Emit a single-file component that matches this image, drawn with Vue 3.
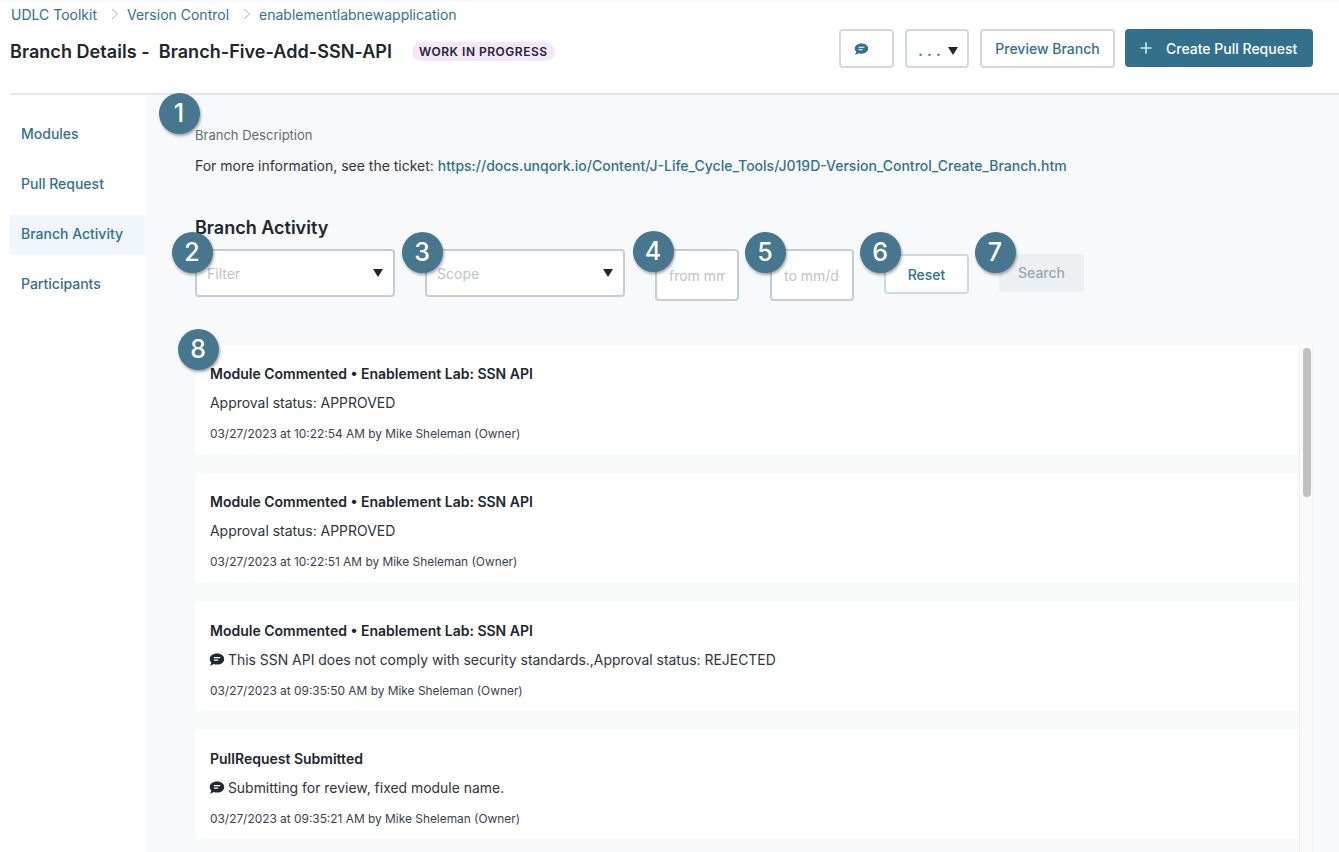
<template>
  <div class="page">
    <header class="top">
      <nav class="crumbs">
        <a>UDLC Toolkit</a>
        <svg class="chev" viewBox="0 0 8 12"><path d="M1 1l5.5 5L1 11" /></svg>
        <a>Version Control</a>
        <svg class="chev" viewBox="0 0 8 12"><path d="M1 1l5.5 5L1 11" /></svg>
        <a>enablementlabnewapplication</a>
      </nav>
      <div class="title-row">
        <div class="title-left">
          <h1>Branch Details -&nbsp; Branch-Five-Add-SSN-API</h1>
          <span class="status">WORK IN PROGRESS</span>
        </div>
        <div class="actions">
          <button class="btn icon-btn">
            <svg class="bubble" viewBox="0 0 16 14">
              <path class="fill" d="M8 0.5C3.8 0.5 0.8 2.9 0.8 6c0 1.3 0.6 2.5 1.5 3.4-0.2 1.1-0.9 2.3-1.6 3.1 1.6-0.1 3-0.7 4-1.5 1 0.4 2.1 0.6 3.3 0.6 4.2 0 7.2-2.5 7.2-5.6S12.2 0.5 8 0.5z" />
              <path class="lines" d="M4.8 4.6h6.4M4.8 7.2h4.4" />
            </svg>
          </button>
          <button class="btn more-btn"><span class="dots">. . .</span><i class="caret"></i></button>
          <button class="btn preview-btn">Preview Branch</button>
          <button class="btn primary">
            <svg class="plus" viewBox="0 0 12 12"><path d="M6 0.5v11M0.5 6h11" /></svg>
            Create Pull Request
          </button>
        </div>
      </div>
    </header>

    <div class="body">
      <aside class="side">
        <a v-for="item in navItems" :key="item" class="nav-item" :class="{ active: item === 'Branch Activity' }">{{ item }}</a>
      </aside>

      <main class="main">
        <div class="desc-label">Branch Description</div>
        <p class="desc">
          For more information, see the ticket:
          <a>https://docs.unqork.io/Content/J-Life_Cycle_Tools/J019D-Version_Control_Create_Branch.htm</a>
        </p>

        <h2>Branch Activity</h2>
        <div class="filters">
          <div class="field select"><span>Filter</span><i class="caret"></i></div>
          <div class="field select"><span>Scope</span><i class="caret"></i></div>
          <input class="field date from" placeholder="from mm/dd/yyyy" />
          <input class="field date to" placeholder="to mm/dd/yyyy" />
          <button class="btn reset">Reset</button>
          <button class="search">Search</button>
        </div>

        <div class="list-wrap">
          <div class="list">
            <article v-for="(row, i) in rows" :key="i" class="card">
              <div class="card-title">{{ row.title }}</div>
              <div class="card-text">
                <svg v-if="row.comment" class="bubble dark" viewBox="0 0 16 14">
                  <path class="fill" d="M8 0.5C3.8 0.5 0.8 2.9 0.8 6c0 1.3 0.6 2.5 1.5 3.4-0.2 1.1-0.9 2.3-1.6 3.1 1.6-0.1 3-0.7 4-1.5 1 0.4 2.1 0.6 3.3 0.6 4.2 0 7.2-2.5 7.2-5.6S12.2 0.5 8 0.5z" />
                  <path class="lines" d="M4.8 4.6h6.4M4.8 7.2h4.4" />
                </svg>
                {{ row.text }}
              </div>
              <div class="card-meta">{{ row.meta }}</div>
            </article>
          </div>
          <div class="track"><div class="thumb"></div></div>
        </div>
      </main>
    </div>

    <span
      v-for="m in markers"
      :key="m.n"
      class="marker"
      :style="{ left: m.x - 20.5 + 'px', top: m.y - 20.5 + 'px' }"
    >{{ m.n }}</span>
  </div>
</template>

<script setup>
const navItems = ['Modules', 'Pull Request', 'Branch Activity', 'Participants']

const commented = 'Module Commented • Enablement Lab: SSN API'

const rows = [
  { title: commented, text: 'Approval status: APPROVED', meta: '03/27/2023 at 10:22:54 AM by Mike Sheleman (Owner)' },
  { title: commented, text: 'Approval status: APPROVED', meta: '03/27/2023 at 10:22:51 AM by Mike Sheleman (Owner)' },
  { title: commented, comment: true, text: 'This SSN API does not comply with security standards.,Approval status: REJECTED', meta: '03/27/2023 at 09:35:50 AM by Mike Sheleman (Owner)' },
  { title: 'PullRequest Submitted', comment: true, text: 'Submitting for review, fixed module name.', meta: '03/27/2023 at 09:35:21 AM by Mike Sheleman (Owner)' }
]

// Callout numbers sit on top of the screenshot, so they keep their own coordinates
const markers = [
  { n: 1, x: 179, y: 113 },
  { n: 2, x: 192, y: 252 },
  { n: 3, x: 422, y: 252 },
  { n: 4, x: 653, y: 251 },
  { n: 5, x: 765, y: 252 },
  { n: 6, x: 880, y: 252 },
  { n: 7, x: 995, y: 252 },
  { n: 8, x: 198, y: 349 }
]
</script>

<style>
html, body {
  margin: 0;
  background: #fff;
}
</style>

<style scoped>
.page {
  position: relative;
  height: 852px;
  overflow: hidden;
  background: #fff;
  box-shadow: inset 0 2px 0 #f8f9fa;
  font-family: Inter, "Liberation Sans", sans-serif;
  color: #20262d;
}

.top {
  height: 95px;
  box-sizing: border-box;
  margin-left: 10px;
  border-bottom: 2px solid #e4e8ec;
  padding-right: 26px;
}

.crumbs {
  display: flex;
  align-items: center;
  height: 28px;
  padding-left: 1px;
  font-size: 14px;
  color: #33708c;
}

.chev {
  width: 8px;
  height: 12px;
  margin: 0 8px 0 14px;
  fill: none;
  stroke: #a6afb7;
  stroke-width: 1;
}

.title-row {
  display: flex;
  justify-content: space-between;
  align-items: flex-start;
  height: 65px;
}

.title-left {
  display: flex;
  align-items: center;
  height: 46px;
}

h1 {
  margin: 0;
  font-size: 18px;
  font-weight: 600;
  letter-spacing: 0.045px;
}

.status {
  margin-left: 20px;
  padding: 2px 7px;
  border-radius: 10px;
  background: #f6e6fa;
  font-size: 12px;
  font-weight: 600;
  letter-spacing: 0.5px;
  line-height: 15px;
}

.actions {
  display: flex;
  gap: 11px;
  margin-top: 1px;
}

.btn {
  box-sizing: border-box;
  height: 39px;
  border: 2px solid #ccdbe3;
  border-radius: 4px;
  background: #fff;
  font-family: inherit;
  font-size: 14px;
  font-weight: 500;
  color: #33708c;
}

.icon-btn {
  width: 55px;
  padding: 1px 0 0 13px;
  text-align: left;
}

.bubble {
  display: block;
  width: 15px;
  height: 13px;
}

.bubble .fill {
  fill: #33708c;
}

.bubble .lines {
  fill: none;
  stroke: #fff;
  stroke-width: 1.2;
}

.bubble.dark {
  display: inline-block;
  width: 16px;
  height: 14px;
  vertical-align: -2px;
  margin-left: -1px;
  margin-right: -1px;
}

.bubble.dark .fill {
  fill: #20262d;
}

.more-btn {
  width: 64px;
  display: flex;
  align-items: center;
  padding: 0 0 0 11px;
  color: #33708c;
}

.dots {
  width: 30px;
  flex-shrink: 0;
  font-size: 16px;
  text-align: left;
  white-space: nowrap;
  margin-top: 3px;
}

.caret {
  width: 0;
  height: 0;
  border-left: 5px solid transparent;
  border-right: 5px solid transparent;
  border-top: 8px solid #20262d;
}

.more-btn .caret {
  margin-top: 4px;
}

.preview-btn {
  width: 135px;
  padding: 0;
}

.primary {
  width: 188px;
  height: 38px;
  display: flex;
  align-items: center;
  padding: 0 0 0 15px;
  border: none;
  background: #33708c;
  color: #fff;
  margin-left: -1px;
}

.plus {
  width: 12px;
  height: 12px;
  margin-right: 14px;
  fill: none;
  stroke: #dfe9ee;
  stroke-width: 1.6;
}

.body {
  display: flex;
  height: 757px;
}

.side {
  width: 135px;
  margin-left: 10px;
  padding-top: 20px;
  flex-shrink: 0;
}

.nav-item {
  display: flex;
  align-items: center;
  box-sizing: border-box;
  height: 40px;
  margin-bottom: 10px;
  padding: 0 0 3px 11px;
  font-size: 14px;
  font-weight: 500;
  color: #33708c;
}

.nav-item.active {
  background: #f0f6f9;
}

.main {
  flex: 1;
  min-width: 0;
  padding: 32px 26px 0 50px;
  background: #f7f9fb;
}

.desc-label {
  font-size: 13px;
  line-height: 16px;
  color: #5f6c78;
}

.desc {
  margin: 13px 0 0;
  font-size: 14px;
  line-height: 20px;
  color: #2e353c;
}

.desc a {
  color: #33708c;
  font-weight: 500;
}

h2 {
  margin: 40px 0 0;
  font-size: 18px;
  line-height: 24px;
  font-weight: 600;
}

.filters {
  display: flex;
  align-items: flex-start;
  margin-top: 9px;
  height: 96px;
}

.field {
  box-sizing: border-box;
  display: flex;
  align-items: center;
  border: 2px solid #c6ced5;
  border-radius: 4px;
  background: #fff;
  font-family: inherit;
  font-size: 14px;
  color: #bcc5cc;
  overflow: hidden;
  white-space: nowrap;
}

.select {
  width: 199.5px;
  height: 48px;
  margin-right: 30.5px;
  justify-content: space-between;
  padding: 0 10px 0 10px;
}

.date {
  width: 84px;
  min-width: 0;
  height: 52px;
  padding: 0 12px;
  outline: none;
}

.date::placeholder {
  color: #bcc5cc;
  opacity: 1;
}

.from {
  margin-right: 31px;
}

.to {
  margin-right: 30px;
}

.reset {
  width: 85px;
  height: 40px;
  margin-top: 5px;
  padding: 0;
}

.search {
  width: 85px;
  height: 38px;
  margin: 5px 0 0 30px;
  padding: 0 0 2px;
  border: none;
  border-radius: 4px;
  background: #edf0f2;
  font-family: inherit;
  font-size: 14px;
  font-weight: 500;
  color: #9aa5af;
}

.list-wrap {
  display: flex;
  height: 520px;
}

.list {
  flex: 1;
  min-width: 0;
  display: flex;
  flex-direction: column;
  gap: 19.3px;
}

.card {
  height: 109px;
  box-sizing: border-box;
  flex-shrink: 0;
  padding: 20px 15px 0;
  background: #fff;
  border-radius: 2px;
}

.card-title {
  font-size: 14px;
  line-height: 18px;
  font-weight: 600;
}

.card-text {
  margin-top: 11px;
  font-size: 13.95px;
  line-height: 18px;
  color: #2e353c;
}

.card-meta {
  margin-top: 14px;
  font-size: 11.9px;
  line-height: 16px;
  color: #3a424a;
}

.track {
  width: 14px;
  flex-shrink: 0;
  padding: 3px 1px 0 3px;
  box-sizing: border-box;
  background: #fbfbfc;
  border-left: 1px solid #eef0f2;
  border-right: 1px solid #eef0f2;
}

.thumb {
  height: 149px;
  border-radius: 4px;
  background: #c1c1c1;
}

.marker {
  position: absolute;
  width: 41px;
  height: 41px;
  display: flex;
  align-items: center;
  justify-content: center;
  border-radius: 50%;
  background: #47768f;
  box-shadow: 1px 2px 3px rgba(0, 0, 0, 0.35);
  font-size: 25px;
  font-weight: 500;
  color: #fff;
}
</style>
